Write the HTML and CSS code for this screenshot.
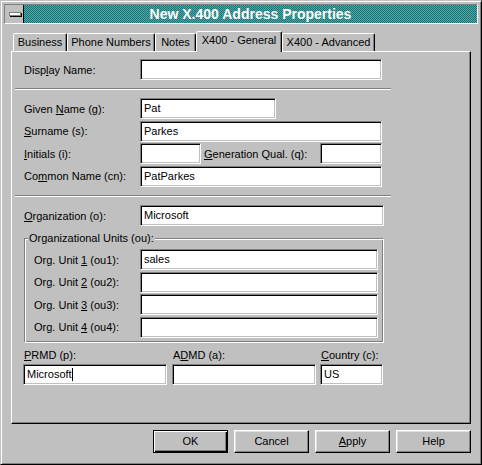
FILE: index.html
```html
<!DOCTYPE html>
<html>
<head>
<meta charset="utf-8">
<title>New X.400 Address Properties</title>
<link rel="stylesheet" href="styles.css">
</head>
<body>
<div class="window">
  <div class="titlebar">
    <div class="sysmenu"><span class="sysbar"></span></div>
    <div class="caption">New X.400 Address Properties</div>
  </div>
  <div class="tabs">
    <div class="tab w-bus">Business</div>
    <div class="tab w-phone">Phone Numbers</div>
    <div class="tab w-notes">Notes</div>
    <div class="tab sel w-gen">X400 - General</div>
    <div class="tab w-adv">X400 - Advanced</div>
  </div>
  <div class="panel">
    <div class="row r-display"><span class="lbl">Disp<u>l</u>ay Name:</span><span class="field w242"></span></div>
    <div class="sep s1"></div>
    <div class="rows r-names">
      <div class="row"><span class="lbl">Given <u>N</u>ame (g):</span><span class="field w136">Pat</span></div>
      <div class="row"><span class="lbl"><u>S</u>urname (s):</span><span class="field w242">Parkes</span></div>
      <div class="row"><span class="lbl"><u>I</u>nitials (i):</span><span class="field w61"></span><span class="lbl-gen"><u>G</u>eneration Qual. (q):</span><span class="field w62"></span></div>
      <div class="row"><span class="lbl">Co<u>m</u>mon Name (cn):</span><span class="field w242">PatParkes</span></div>
    </div>
    <div class="sep s2"></div>
    <div class="row r-org"><span class="lbl"><u>O</u>rganization (o):</span><span class="field w244">Microsoft</span></div>
    <div class="group">
      <span class="legend">Organizational Units (ou):</span>
      <div class="rows">
        <div class="row"><span class="lbl-ou">Org. Unit <u>1</u> (ou1):</span><span class="field w238">sales</span></div>
        <div class="row"><span class="lbl-ou">Org. Unit <u>2</u> (ou2):</span><span class="field w238"></span></div>
        <div class="row"><span class="lbl-ou">Org. Unit <u>3</u> (ou3):</span><span class="field w238"></span></div>
        <div class="row"><span class="lbl-ou">Org. Unit <u>4</u> (ou4):</span><span class="field w238"></span></div>
      </div>
    </div>
    <div class="cols">
      <div class="col w144"><span class="clbl"><u>P</u>RMD (p):</span><span class="field">Microsoft<span class="caret"></span></span></div>
      <div class="col w144"><span class="clbl">A<u>D</u>MD (a):</span><span class="field"></span></div>
      <div class="col w63"><span class="clbl"><u>C</u>ountry (c):</span><span class="field">US</span></div>
    </div>
  </div>
  <div class="buttons">
    <div class="btn def">OK</div>
    <div class="btn">Cancel</div>
    <div class="btn"><u>A</u>pply</div>
    <div class="btn">Help</div>
  </div>
</div>
</body>
</html>
```
FILE: styles.css
```css
* { box-sizing: border-box; }
html, body { margin: 0; padding: 0; }
body {
  background: #c0c0c0;
  font-family: "Liberation Sans", Arial, sans-serif;
  font-size: 11px;
  color: #000;
  width: 482px;
  height: 465px;
  overflow: hidden;
}
u { text-decoration: underline; text-underline-offset: 1px; }

.window {
  width: 482px;
  height: 465px;
  border: 1px solid;
  border-color: #c0c0c0 #000 #000 #c0c0c0;
  box-shadow: inset 1px 1px #fff, inset -1px -1px #808080;
  padding: 3px;
  display: flex;
  flex-direction: column;
}

/* title bar */
.titlebar {
  height: 20px;
  display: flex;
  border: 1px solid;
  border-color: #808080 #fff #fff #808080;
}
.sysmenu {
  width: 19px;
  border-right: 1px solid #000;
  background: #c0c0c0;
  display: flex;
  align-items: center;
  padding-left: 4px;
}
.sysbar {
  width: 12px;
  height: 4px;
  background: #fff;
  border: 1px solid #808080;
  box-shadow: 1px 1px #000;
}
.caption {
  flex: 1;
  background: repeating-conic-gradient(#008080 0 25%, #6a9a9a 0 50%) 0 0 / 2px 2px;
  color: #fff;
  font-weight: bold;
  font-size: 14px;
  line-height: 18px;
  text-align: center;
}

/* tabs */
.tabs {
  display: flex;
  align-items: flex-end;
  height: 20px;
  margin: 7px 0 0 7px;
  padding-left: 2px;
  position: relative;
  z-index: 1;
}
.tab {
  height: 18px;
  border: 1px solid;
  border-bottom: none;
  border-color: #fff #000 transparent #fff;
  box-shadow: inset -1px 0 #808080;
  border-radius: 2px 2px 0 0;
  text-align: center;
  line-height: 16px;
  white-space: nowrap;
}
.tab.sel {
  height: 21px;
  margin-bottom: -1px;
  background: #c0c0c0;
}
.w-bus { width: 54px; }
.w-phone { width: 88px; }
.w-notes { width: 41px; }
.w-gen { width: 86px; }
.w-adv { width: 93px; }

/* panel */
.panel {
  margin-left: 7px;
  width: 460px;
  height: 373px;
  border: 1px solid;
  border-color: #fff #000 #000 #fff;
  box-shadow: inset -1px -1px #808080;
  padding: 7px 0 0 12px;
  display: flex;
  flex-direction: column;
}
.row {
  display: flex;
  align-items: center;
  height: 21px;
}
.rows {
  display: flex;
  flex-direction: column;
  gap: 1.5px;
}
.lbl { width: 116px; flex: none; white-space: nowrap; }
.lbl-gen { width: 119px; padding-left: 3px; white-space: nowrap; }
.lbl-ou { width: 106px; flex: none; white-space: nowrap; }

.field {
  display: block;
  height: 21px;
  background: #fff;
  border: 1px solid;
  border-color: #808080 #fff #fff #808080;
  box-shadow: inset 1px 1px #000, inset -1px -1px #c0c0c0;
  padding: 0 3px;
  line-height: 19px;
  white-space: nowrap;
  flex: none;
}
.w242 { width: 242px; }
.w244 { width: 244px; }
.w238 { width: 238px; }
.w136 { width: 136px; }
.w61 { width: 61px; }
.w62 { width: 62px; }

.sep {
  height: 2px;
  width: 376px;
  margin-left: -9px;
  border-top: 1px solid #808080;
  border-bottom: 1px solid #fff;
}
.s1 { margin-top: 8px; }
.r-names { margin-top: 8px; }
.s2 { margin-top: 8.5px; }
.r-org { margin-top: 8px; }

.group {
  position: relative;
  margin-top: 12px;
  width: 360px;
  height: 105px;
  border: 1px solid;
  border-color: #808080 #fff #fff #808080;
  box-shadow: inset 1px 1px #fff, inset -1px -1px #808080;
  padding: 10px 0 0 9px;
}
.legend {
  position: absolute;
  top: -7px;
  left: 3px;
  background: #c0c0c0;
  padding: 0 1px;
  line-height: 13px;
  white-space: nowrap;
}

.cols {
  display: flex;
  margin: 6px 0 0 -1px;
}
.col { display: flex; flex-direction: column; }
.col + .col { margin-left: 5px; }
.col.w63 { margin-left: 4px; width: 63px; }
.col.w144 { width: 144px; }
.clbl { line-height: 13px; padding-left: 1px; margin-bottom: 2px; white-space: nowrap; }
.caret {
  display: inline-block;
  width: 1px;
  height: 13px;
  background: #000;
  vertical-align: -3px;
}

/* buttons */
.buttons {
  display: flex;
  justify-content: flex-end;
  gap: 6px;
  margin-top: 6px;
  padding-right: 7px;
}
.btn {
  width: 75px;
  height: 23px;
  border: 1px solid;
  border-color: #fff #000 #000 #fff;
  box-shadow: inset -1px -1px #808080, inset 1px 1px #dfdfdf;
  text-align: center;
  line-height: 21px;
}
.btn.def {
  border-color: #000;
  box-shadow: inset 1px 1px #fff, inset -1px -1px #000, inset -2px -2px #808080;
}
```
